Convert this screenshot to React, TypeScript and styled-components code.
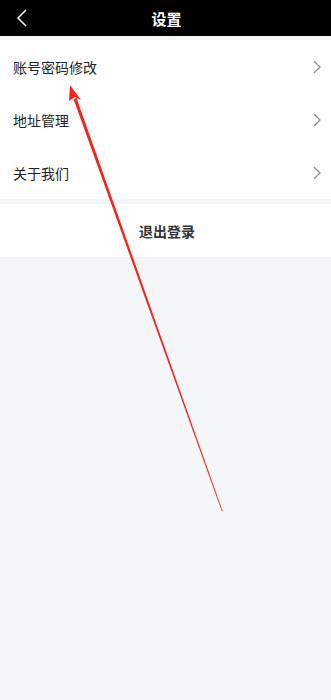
import styled, { createGlobalStyle } from "styled-components";

const GlobalStyle = createGlobalStyle`
  html, body {
    margin: 0;
    padding: 0;
    background: #f5f6f8;
    font-family: "Noto Sans CJK SC", "Noto Sans", sans-serif;
  }
`;

const Page = styled.div`
  position: relative;
  width: 331px;
  min-height: 700px;
  background: #f5f6f8;
  overflow: hidden;
`;

const Header = styled.div`
  height: 36px;
  background: #000;
  display: flex;
  align-items: center;
  justify-content: center;
  position: relative;
`;

const BackButton = styled.div`
  position: absolute;
  left: 16px;
  top: 0;
  height: 36px;
  display: flex;
  align-items: center;
`;

const Title = styled.h1`
  margin: 0 0 0 2px;
  color: #fff;
  font-size: 15px;
  font-weight: 700;
`;

const Group = styled.div<{ $gap: number }>`
  margin-top: ${(p) => p.$gap}px;
  background: #fff;
`;

const Row = styled.div`
  height: 53px;
  display: flex;
  align-items: center;
  justify-content: space-between;
  padding: 0 10px 0 13px;
  font-size: 14px;
  color: #222;
`;

const LogoutButton = styled.div`
  height: 53px;
  display: flex;
  align-items: center;
  justify-content: center;
  padding-left: 3px;
  font-size: 14px;
  font-weight: 700;
  color: #333;
`;

const Annotation = styled.svg`
  position: absolute;
  left: 0;
  top: 0;
  pointer-events: none;
`;

const Chevron = () => (
  <svg width="8" height="14" viewBox="0 0 8 14">
    <path d="M1 1 L7 7 L1 13" fill="none" stroke="#888" strokeWidth="1.2" />
  </svg>
);

const items = ["账号密码修改", "地址管理", "关于我们"];

export default function App() {
  return (
    <Page>
      <GlobalStyle />
      <Header>
        <BackButton>
          <svg width="12" height="18" viewBox="0 0 12 18">
            <path d="M10 1 L2 9 L10 17" fill="none" stroke="#fff" strokeWidth="1.5" />
          </svg>
        </BackButton>
        <Title>设置</Title>
      </Header>
      <Group $gap={4}>
        {items.map((label) => (
          <Row key={label}>
            <span>{label}</span>
            <Chevron />
          </Row>
        ))}
      </Group>
      <Group $gap={5}>
        <LogoutButton>退出登录</LogoutButton>
      </Group>
      <Annotation width="331" height="700" viewBox="0 0 331 700">
        <polygon points="73.5,99 76.5,98 222.6,511 221.8,511.2" fill="#f4231f" />
        <polygon points="70,85 81,100 75,97 69,101" fill="#f4231f" />
      </Annotation>
    </Page>
  );
}
